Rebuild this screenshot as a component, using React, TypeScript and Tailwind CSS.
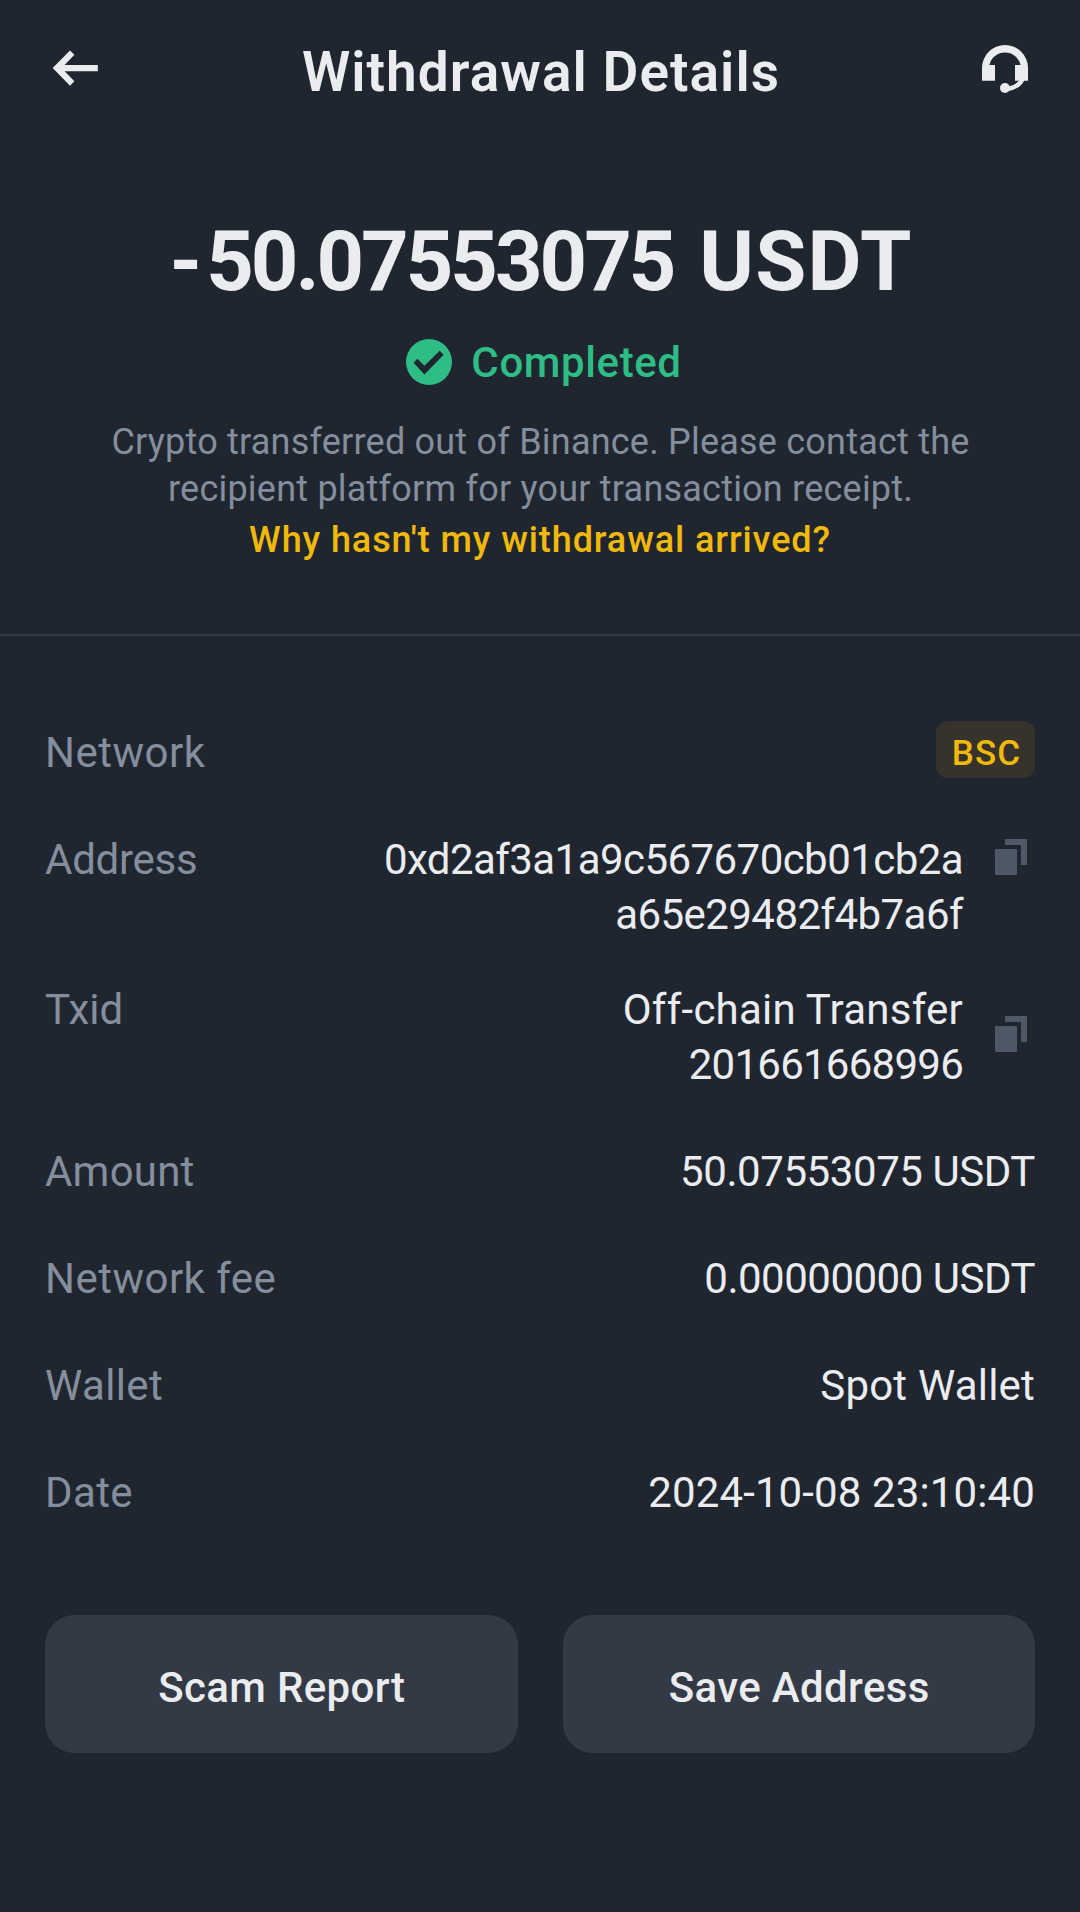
import type { ReactNode } from 'react';

type DetailRowProps = {
  label: string;
  labelClassName?: string;
  className?: string;
  children: ReactNode;
};

type CopyButtonProps = {
  label: string;
  className: string;
};

function BackIcon() {
  return (
    <svg width="46" height="36" viewBox="0 0 46 36" fill="currentColor" aria-hidden="true">
      <path d="M.7 18 18 .4l4.4 4.3L12.6 14.9h33.2v6.3H12.6l9.8 10.1-4.4 4.4z" />
    </svg>
  );
}

function SupportIcon() {
  return (
    <svg width="46" height="48" viewBox="0 0 46 48" fill="currentColor" aria-hidden="true">
      <path d="M0 23a23 23 0 0 1 46 0v12.7H33V20h5.6a16 16 0 0 0-31.2 0H13v15.7H0z" />
      <path d="M40.5 34Q37 42 25 44" fill="none" stroke="currentColor" strokeWidth="4.4" />
      <circle cx="23" cy="43" r="5" />
    </svg>
  );
}

function CompletedIcon() {
  return (
    <svg width="46" height="46" viewBox="0 0 46 46" aria-hidden="true">
      <circle cx="23" cy="23" r="23" fill="#2ebd85" />
      <path d="m7.6 23.7 3.8-4 7 7L33.7 11.7l4 4-19.3 19.7z" fill="#202630" />
    </svg>
  );
}

function CopyButton({ label, className }: CopyButtonProps) {
  return (
    <button aria-label={label} className={`ml-8 mr-2 shrink-0 self-start text-[#4f5867] ${className}`}>
      <svg width="32" height="36" viewBox="0 0 32 36" fill="currentColor" aria-hidden="true">
        <path d="M0 10h22v26H0z" />
        <path d="M10 0h22v26h-6V6H10z" />
      </svg>
    </button>
  );
}

function DetailRow({ label, labelClassName = 'tracking-[0.2px]', className = '', children }: DetailRowProps) {
  return (
    <div className={`flex items-start justify-between ${className}`}>
      <dt className={`text-[#848e9c] ${labelClassName}`}>{label}</dt>
      <dd className="flex text-right">{children}</dd>
    </div>
  );
}

export default function App() {
  return (
    <div className="min-h-[1912px] w-[1080px] bg-[#202630] font-[Roboto,sans-serif] text-[#eaecef]">
      <header className="flex h-[136px] items-center justify-between px-[52px]">
        <button aria-label="Back">
          <BackIcon />
        </button>
        <h1 className="pt-2 pl-0.5 text-[55px] leading-[64px] font-semibold tracking-[1.04px]">Withdrawal Details</h1>
        <button aria-label="Support" className="pt-0.5">
          <SupportIcon />
        </button>
      </header>

      <section className="flex flex-col items-center border-b-2 border-[#333b47] pt-[76px] pb-[70px] text-center">
        <p className="pl-0.5 text-[83px] leading-[100px] font-bold">
          <span className="tracking-[4px]">-</span>
          <span className="tracking-[-3px]">50.07553075</span>
          <span className="ml-1 tracking-[1.2px]"> USDT</span>
        </p>
        <div className="mt-[27px] flex h-[46px] items-center gap-[19px] pl-2 text-[#2ebd85]">
          <CompletedIcon />
          <span className="pt-0.5 text-[42px] leading-[46px] font-medium tracking-[0.61px]">Completed</span>
        </div>
        <p className="mt-[34px] w-[900px] pl-px text-[36px] leading-[47px] tracking-[0.22px] text-[#848e9c]">
          Crypto transferred out of Binance. Please contact the recipient platform for your transaction receipt.
        </p>
        <a className="mt-1 text-[36px] leading-[47px] font-medium tracking-[0.9px] text-[#f0b90b]">
          Why hasn't my withdrawal arrived?
        </a>
      </section>

      <dl className="flex flex-col gap-[52px] px-[45px] pt-[89px] text-[42px] leading-[55px]">
        <DetailRow label="Network" labelClassName="tracking-[0.5px]" className="h-[55px]">
          <span className="-mt-1 h-[57px] rounded-xl bg-[#35332b] pt-[5px] pr-[14px] pl-4 text-[35px] font-medium tracking-[1px] text-[#f0b90b]">
            BSC
          </span>
        </DetailRow>
        <DetailRow label="Address" labelClassName="tracking-[-0.26px]" className="-mb-3">
          <span className="tracking-[-0.56px]">
            0xd2af3a1a9c567670cb01cb2a
            <br />
            a65e29482f4b7a6f
          </span>
          <CopyButton label="Copy address" className="mt-[7px]" />
        </DetailRow>
        <DetailRow label="Txid" labelClassName="tracking-normal">
          <span className="flex flex-col">
            <span className="tracking-[0.24px]">Off-chain Transfer</span>
            <span className="tracking-[-0.75px]">201661668996</span>
          </span>
          <CopyButton label="Copy transaction id" className="mt-[34px]" />
        </DetailRow>
        <DetailRow label="Amount">
          <span className="tracking-[-0.43px]">50.07553075 USDT</span>
        </DetailRow>
        <DetailRow label="Network fee" labelClassName="tracking-[0.48px]">
          <span className="tracking-[-0.5px]">0.00000000 USDT</span>
        </DetailRow>
        <DetailRow label="Wallet" labelClassName="tracking-[0.37px]">
          <span className="tracking-[0.2px]">Spot Wallet</span>
        </DetailRow>
        <DetailRow label="Date" labelClassName="tracking-[0.4px]">
          <span className="tracking-[0.12px]">2024-10-08 23:10:40</span>
        </DetailRow>
      </dl>

      <div className="mt-[95px] grid grid-cols-2 gap-[45px] px-[45px] text-[42px] font-medium tracking-[0.36px]">
        <button className="h-[138px] rounded-[30px] bg-[#333a46] pt-[7px] pl-px">Scam Report</button>
        <button className="h-[138px] rounded-[30px] bg-[#333a46] pt-[7px] pl-px">Save Address</button>
      </div>
    </div>
  );
}
